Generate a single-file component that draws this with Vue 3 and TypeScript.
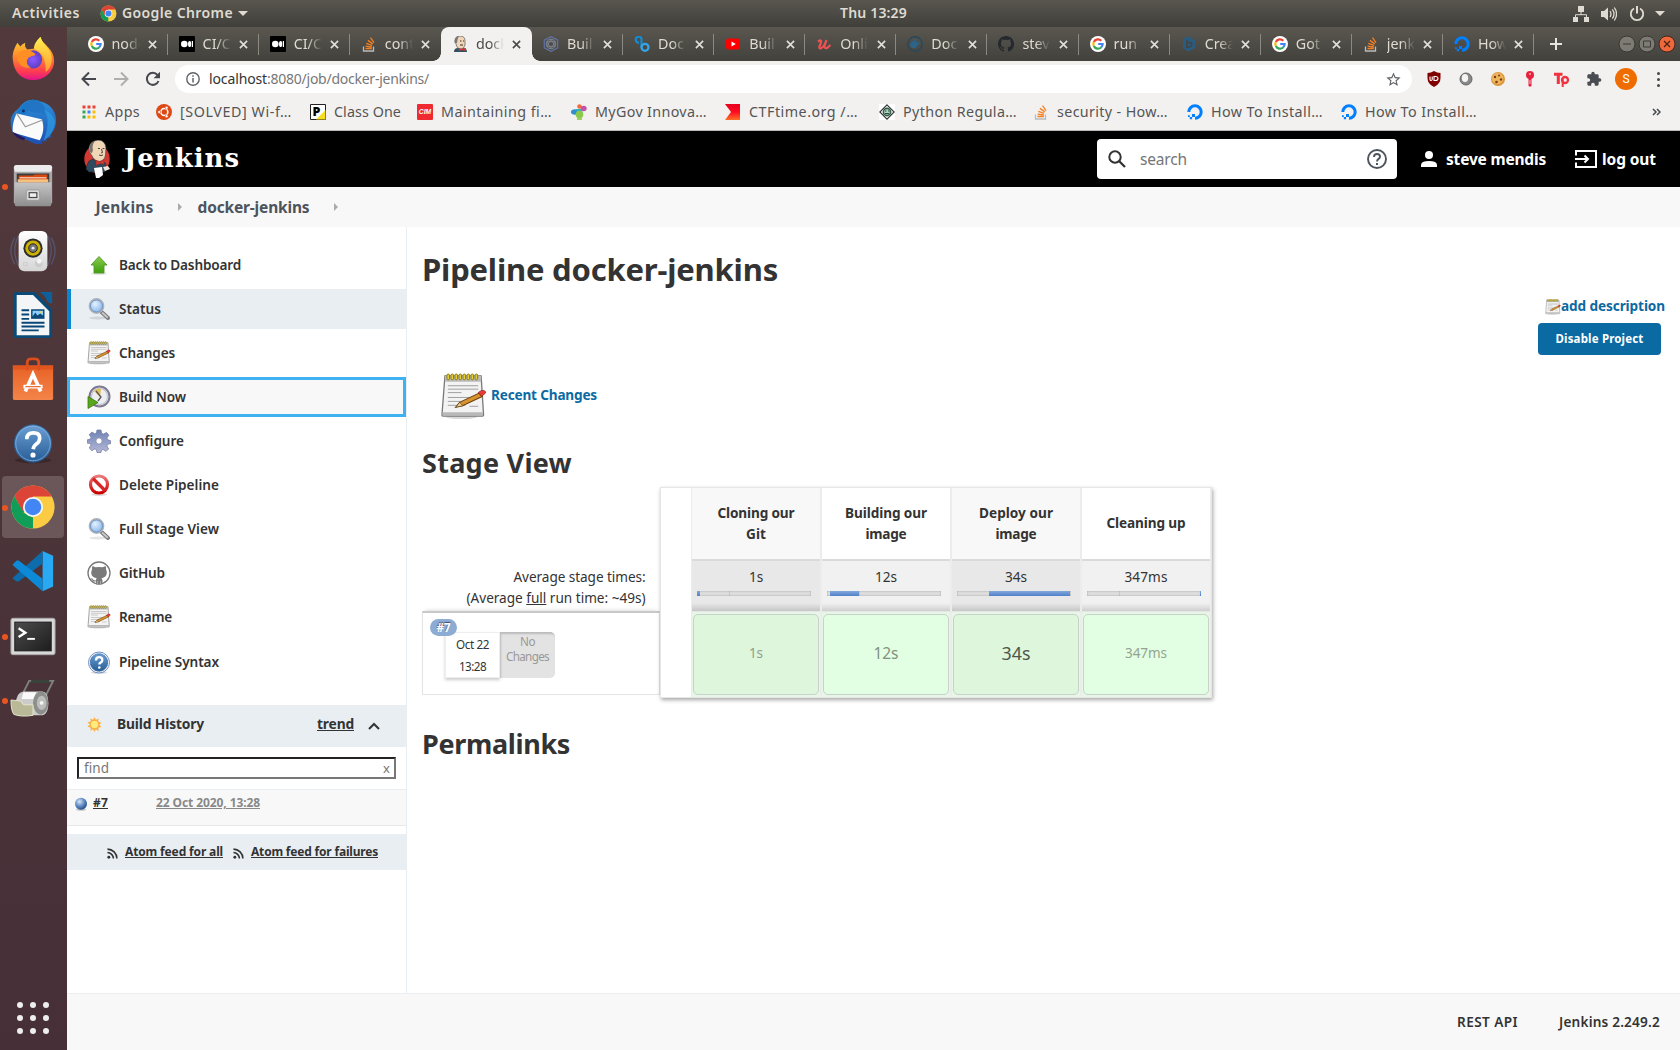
<script setup lang="ts">
interface Tab { icon: string; title: string; active?: boolean }
interface Bookmark { icon: string; label: string; width: number; gap: number; mark?: string }
interface Task { icon: string; label: string; width: number; state?: string }
interface Stage { name: string[]; widths: number[]; avg: string; avgWidth: number; from: number; size: number; cell: string; color: string; font: number; cellWidth: number }

// Spreads the letters of a label so that it takes exactly the given width.
const vFit = {
  mounted(el: HTMLElement, binding: { value: number }) {
    const natural = el.getBoundingClientRect().width
    const count = Math.max(1, (el.textContent ?? '').length)
    el.style.letterSpacing = `${(binding.value - natural) / count}px`
    el.style.width = `${binding.value}px`
  },
}

const dock = [
  { icon: 'firefox' }, { icon: 'thunderbird' }, { icon: 'files', running: true },
  { icon: 'rhythmbox' }, { icon: 'writer' }, { icon: 'software' },
  { icon: 'helpball' }, { icon: 'chrome', running: true, focused: true },
  { icon: 'vscode' }, { icon: 'terminal', running: true }, { icon: 'roller', running: true },
]

const tabs: Tab[] = [
  { icon: 'google', title: 'node' }, { icon: 'medium', title: 'CI/C' }, { icon: 'medium', title: 'CI/C' },
  { icon: 'stack', title: 'cont' }, { icon: 'butlerface', title: 'dock', active: true }, { icon: 'hexa', title: 'Buil' },
  { icon: 'cloudbees', title: 'Doc' }, { icon: 'youtube', title: 'Buil' }, { icon: 'udemy', title: 'Onli' },
  { icon: 'dockerhub', title: 'Doc' }, { icon: 'githubdark', title: 'stev' }, { icon: 'google', title: 'run' },
  { icon: 'hexb', title: 'Crea' }, { icon: 'google', title: 'Got' }, { icon: 'stack', title: 'jenk' },
  { icon: 'ocean', title: 'How' },
]

const bookmarks: Bookmark[] = [
  { icon: 'apps', label: 'Apps', width: 35, gap: 16 },
  { icon: 'ubuntu', label: '[SOLVED] Wi-f…', width: 112, gap: 18 },
  { icon: 'pbox', mark: 'P', label: 'Class One', width: 67, gap: 16 },
  { icon: 'cim', mark: 'CIM', label: 'Maintaining fi…', width: 111, gap: 19 },
  { icon: 'mygov', label: 'MyGov Innova…', width: 112, gap: 18 },
  { icon: 'ctf', label: 'CTFtime.org /…', width: 109, gap: 21 },
  { icon: 'pyreg', label: 'Python Regula…', width: 114, gap: 16 },
  { icon: 'stack', label: 'security - How…', width: 111, gap: 19 },
  { icon: 'ocean', label: 'How To Install…', width: 112, gap: 18 },
  { icon: 'ocean', label: 'How To Install…', width: 112, gap: 0 },
]

const extensions = ['ublock', 'ring', 'cookie', 'pin', 'tp', 'puzzle']

const tasks: Task[] = [
  { icon: 'up', label: 'Back to Dashboard', width: 122 },
  { icon: 'search', label: 'Status', width: 42, state: 'current' },
  { icon: 'notepad', label: 'Changes', width: 56 },
  { icon: 'clock', label: 'Build Now', width: 67, state: 'focus' },
  { icon: 'gear', label: 'Configure', width: 65 },
  { icon: 'ban', label: 'Delete Pipeline', width: 100 },
  { icon: 'search', label: 'Full Stage View', width: 100 },
  { icon: 'octocat', label: 'GitHub', width: 46 },
  { icon: 'notepad', label: 'Rename', width: 53 },
  { icon: 'help', label: 'Pipeline Syntax', width: 100, state: 'last' },
]

const stages: Stage[] = [
  { name: ['Cloning our', 'Git'], widths: [77, 20], avg: '1s', avgWidth: 14, from: 0, size: 3, cell: '1s', color: '#8f9f8e', font: 13.5, cellWidth: 14 },
  { name: ['Building our', 'image'], widths: [82, 41], avg: '12s', avgWidth: 22, from: 3, size: 29, cell: '12s', color: '#82917f', font: 15.5, cellWidth: 25 },
  { name: ['Deploy our', 'image'], widths: [74, 41], avg: '34s', avgWidth: 22, from: 32, size: 81, cell: '34s', color: '#4d574c', font: 17.8, cellWidth: 29 },
  { name: ['Cleaning up'], widths: [79], avg: '347ms', avgWidth: 43, from: 113, size: 1, cell: '347ms', color: '#93a391', font: 13.5, cellWidth: 42 },
]
</script>

<template>
  <div class="desktop">
    <svg class="sprites" aria-hidden="true">
      <defs>
        <linearGradient id="gOrange" x1="0" y1="0" x2="0" y2="1"><stop offset="0" stop-color="#ffd83a" /><stop offset=".45" stop-color="#ff8a2c" /><stop offset=".8" stop-color="#ff3c50" /><stop offset="1" stop-color="#e3148c" /></linearGradient>
        <linearGradient id="gYellow" x1="0" y1="0" x2="0" y2="1"><stop offset="0" stop-color="#fff04f" /><stop offset="1" stop-color="#ff9a30" /></linearGradient>
        <radialGradient id="gPurple"><stop offset="0" stop-color="#9059ff" /><stop offset="1" stop-color="#5b3fc4" /></radialGradient>
        <linearGradient id="gBird" x1="0" y1="0" x2="0" y2="1"><stop offset="0" stop-color="#2c8fd8" /><stop offset="1" stop-color="#1f4fb3" /></linearGradient>
        <linearGradient id="gSteel" x1="0" y1="0" x2="0" y2="1"><stop offset="0" stop-color="#c6c6c6" /><stop offset="1" stop-color="#8e8e8e" /></linearGradient>
        <linearGradient id="gWhite" x1="0" y1="0" x2="0" y2="1"><stop offset="0" stop-color="#fff" /><stop offset="1" stop-color="#d5d5d5" /></linearGradient>
        <linearGradient id="gBall" x1="0" y1="0" x2="0" y2="1"><stop offset="0" stop-color="#6b9fd4" /><stop offset="1" stop-color="#275d95" /></linearGradient>
        <linearGradient id="gBag" x1="0" y1="0" x2="0" y2="1"><stop offset="0" stop-color="#e86226" /><stop offset="1" stop-color="#f4844a" /></linearGradient>
        <linearGradient id="gTerm" x1="0" y1="0" x2="1" y2="1"><stop offset="0" stop-color="#4c4c4c" /><stop offset="1" stop-color="#1d1d1d" /></linearGradient>
        <linearGradient id="gGreen" x1="0" y1="0" x2="0" y2="1"><stop offset="0" stop-color="#8acb4f" /><stop offset="1" stop-color="#3f9f0c" /></linearGradient>
        <linearGradient id="gRed" x1="0" y1="0" x2="0" y2="1"><stop offset="0" stop-color="#ea7a7a" /><stop offset="1" stop-color="#cc0000" /></linearGradient>
        <linearGradient id="gGear" x1="0" y1="0" x2="0" y2="1"><stop offset="0" stop-color="#6d83b5" /><stop offset="1" stop-color="#b5b8d8" /></linearGradient>
        <radialGradient id="gOrb" cx=".38" cy=".32" r=".7"><stop offset="0" stop-color="#d9e6f5" /><stop offset=".5" stop-color="#6a93c8" /><stop offset="1" stop-color="#204a87" /></radialGradient>
        <radialGradient id="gGlass" cx=".4" cy=".35"><stop offset="0" stop-color="#e6f1fd" /><stop offset="1" stop-color="#9dc3ee" /></radialGradient>
        <linearGradient id="gCtf" x1="0" y1="0" x2="0" y2="1"><stop offset="0" stop-color="#e6001f" /><stop offset=".5" stop-color="#ff0b1f" /><stop offset="1" stop-color="#ff7029" /></linearGradient>
      </defs>

      <!-- launcher -->
      <symbol id="firefox" viewBox="0 0 48 48">
        <path d="M3 26C2 19 5 12 8 8c1 2 2 3 3 4 1-2 3-3 5-4-1 3 0 5 2 7l8-1c0-5 3-9 6-12 1 5 5 7 8 11 4 4 6 9 6 14 0 11-10 20-22 20S4 38 3 26z" fill="url(#gOrange)" />
        <path d="M25 14c0-5 4-10 7-12 1 6 6 9 9 14 5 9 2 19-4 23 1-5-1-15-4-19-2-3-5-4-8-6z" fill="url(#gYellow)" />
        <circle cx="24" cy="25.500" r="9.500" fill="url(#gPurple)" />
        <path d="M9 18c5-3 11-3 15 0 2 1 3 2 2 3-2 1-5 1-7 3-3 4-1 8 3 10-6 1-12-2-14-7z" fill="#ff8f25" />
      </symbol>
      <symbol id="thunderbird" viewBox="0 0 48 48">
        <path d="M9 10C14 2 22-1 29 2c11 1 19 9 19 20 0 7-2 12-6 15l1 3-5 1 0 3-5 0 1 3-7 0L4 37C-2 25 0 16 9 10z" fill="url(#gBird)" />
        <path d="M11 9c4-7 13-10 20-7-8 0-11 5-12 10-1 3-4 4-7 4-3 0-4 2-6 3 0-4 2-7 5-10z" fill="#1b78c8" />
        <path d="M19 3c8-3 14 0 17 5l0 9-4-3c-8 1-16 0-13-11z" fill="#2275c4" />
        <path d="M36 12c5 8 4 20-1 31 7-3 11-10 12-19-1-5-5-11-11-12z" fill="#2e9ae0" opacity=".75" />
        <path d="M7 15l26 6c3 7 2 15-2 22L3 35c-1-6 1-15 4-20z" fill="#fafafa" /><path d="M7 15l9 14 18-7" fill="none" stroke="#999" stroke-width="1.200" />
        <path d="M2 34l14 7-2 2C9 42 5 39 2 34z" fill="#281a62" /><circle cx="14" cy="12.500" r="1.500" fill="#102e68" />
      </symbol>
      <symbol id="files" viewBox="0 0 48 48">
        <path d="M4 5q0-3 3-3h34q3 0 3 3v37H4z" fill="#aaa" /><path d="M4 5q0-3 3-3h34q3 0 3 3l-1 4H5z" fill="#ececec" />
        <path d="M7 11h34v12H7z" fill="#3b3b3b" /><path d="M9 13h15l2-1h13v11H9z" fill="#d9480f" /><path d="M8 17h32v3H8z" fill="#f5c27d" /><path d="M10 15h28v1H10z" fill="#fff" />
        <rect x="5" y="20" width="38" height="25" rx="1.500" fill="url(#gSteel)" /><rect x="17" y="28" width="14" height="11" rx="2" fill="#d8d8d8" stroke="#999" /><rect x="20" y="31" width="8" height="5" fill="#eee" stroke="#444" stroke-width="1.200" />
      </symbol>
      <symbol id="rhythmbox" viewBox="0 0 48 48">
        <path d="M5 10q-8 14 0 28M9 8q-8 15 0 32M43 10q8 14 0 28M39 8q8 15 0 32" fill="none" stroke="#5d6f9c" stroke-width="1.400" opacity=".5" />
        <rect x="9" y="3" width="30" height="42" rx="6" fill="url(#gWhite)" /><circle cx="24" cy="21" r="10" fill="#2d2d2d" /><circle cx="24" cy="21" r="8" fill="#cdb100" /><circle cx="24" cy="21" r="4.500" fill="#777" stroke="#222" /><circle cx="24" cy="21" r="1.500" fill="#eee" />
        <circle cx="30" cy="37" r="4" fill="#ccc" /><rect x="28" y="32" width="5" height="5" rx="2" fill="#f4f4f4" /><path d="M14 36h4v3h-4z" fill="none" stroke="#ccc" />
      </symbol>
      <symbol id="writer" viewBox="0 0 48 48">
        <path d="M6 0h20l18 18v28q0 2-2 2H6q-2 0-2-2V2q0-2 2-2z" fill="#0b4a77" /><path d="M31 0h13v12q-4 0-6-4-1-4-7-8z" fill="#0d609b" /><path d="M7 3h17l17 17v25H7z" fill="#f3f5f6" />
        <path d="M12 19h8M12 23.500h8M12 28h8M12 32h24M12 36h24M12 40h18" stroke="#064778" stroke-width="2" /><rect x="22" y="18" width="14" height="10" fill="#0b4a77" /><path d="M23.500 19.500h11v5l-3-2-3 2-2-3-3 4z" fill="#8bd0ff" /><circle cx="32.500" cy="21" r="1.200" fill="#ffce3d" />
      </symbol>
      <symbol id="software" viewBox="0 0 48 48">
        <path d="M18 15V7q0-4 4-4h4q4 0 4 4v8" fill="none" stroke="#c9461c" stroke-width="3" /><path d="M3 10h42v34q0 2-2 2H5q-2 0-2-2z" fill="url(#gBag)" /><path d="M3 10h42v4H3z" fill="#e1551f" />
        <path d="M18 15V7q0-4 4-4h4q4 0 4 4v8" fill="none" stroke="#dd4f20" stroke-width="2" /><path d="M16 37l8-18 8 18M14 32h20" fill="none" stroke="#fff" stroke-width="3.800" /><path d="M16 32h16" stroke="#e86226" stroke-width="1.200" />
      </symbol>
      <symbol id="helpball" viewBox="0 0 48 48">
        <ellipse cx="24" cy="42" rx="19" ry="3" fill="#000" opacity=".25" /><circle cx="24" cy="24.500" r="19.500" fill="url(#gBall)" stroke="#2a5d90" /><circle cx="24" cy="24.500" r="18" fill="none" stroke="#85b1df" stroke-width=".8" />
        <path d="M17.500 20q0-6.500 7-6.500 6.500 0 6.500 5.500 0 3.500-3.500 6-3 2.200-3.300 5.500" fill="none" stroke="#fff" stroke-width="3.800" /><circle cx="24" cy="36.500" r="2.700" fill="#fff" />
      </symbol>
      <symbol id="chrome" viewBox="0 0 48 48">
        <circle cx="24" cy="24" r="22.500" fill="#fbcb43" /><path d="M43.500 13H24L14 30 4.500 12.800A22.500 22.500 0 0 1 43.500 13z" fill="#db4437" />
        <path d="M4.500 12.800L14.500 30 24 35l0 11.500A22.500 22.500 0 0 1 4.500 12.800z" fill="#109d58" /><path d="M24 46.500l9.500-17L24 34z" fill="#fbcb43" /><circle cx="24" cy="24" r="10.500" fill="#f4f5f6" /><circle cx="24" cy="24" r="8.600" fill="#4285f4" />
      </symbol>
      <symbol id="vscode" viewBox="0 0 48 48">
        <path d="M34 2l11 5v32l-11 5z" fill="#29a8f3" /><path d="M3 30L34 2v13L9 34H7l-4-3z" fill="#0c6cac" /><path d="M3 16l4-4h2l25 19v13L3 17z" fill="#0d8ad7" />
      </symbol>
      <symbol id="terminal" viewBox="0 0 48 48">
        <rect x="1" y="5.500" width="46" height="38" rx="2" fill="#d8d8d8" stroke="#a7a7a7" /><rect x="5" y="9.500" width="38" height="30" fill="url(#gTerm)" stroke="#1a1a1a" /><path d="M9 16l7 4.500-7 4.500" fill="none" stroke="#fff" stroke-width="2.500" /><path d="M18 27h8" stroke="#fff" stroke-width="2" />
      </symbol>
      <symbol id="roller" viewBox="0 0 48 48">
        <path d="M14 16L20 4h25L34 26" fill="none" stroke="#7d837c" stroke-width="2" /><path d="M22 4.500h19" stroke="#3a423c" stroke-width="3.500" /><path d="M14 15h20q6 1 6 12 0 13-8 13H12q-6 0-6-11 0-13 8-14z" fill="#ccc" /><path d="M14 16h13v7H12z" fill="#fafafa" />
        <ellipse cx="32" cy="27" rx="8" ry="12" fill="#8d8f8c" /><ellipse cx="33" cy="27" rx="5" ry="7.500" fill="#bcbcbc" /><path d="M1 24l10 1 3 4h10v11q-12 2-20-1-3-4-3-15z" fill="#b9b998" stroke="#e6e6ce" /><circle cx="33" cy="27" r="2" fill="#f4f4f4" />
      </symbol>

      <!-- favicons -->
      <symbol id="google" viewBox="0 0 16 16"><circle cx="8" cy="8" r="8" fill="#fff" /><g fill="none" stroke-width="2.200"><path d="M11.300 4.700A4.700 4.700 0 0 0 3.800 6" stroke="#ea4335" /><path d="M3.800 6a4.700 4.700 0 0 0 0 4" stroke="#fbbc05" /><path d="M3.800 10a4.700 4.700 0 0 0 7.300 1.500" stroke="#34a853" /><path d="M8.200 8h4.400q0 2-1.500 3.500" stroke="#4285f4" /></g></symbol>
      <symbol id="medium" viewBox="0 0 16 16"><rect width="16" height="16" rx="1" fill="#000" /><circle cx="5.300" cy="8" r="3.300" fill="#fff" /><ellipse cx="10.600" cy="8" rx="1.600" ry="3.100" fill="#fff" /><path d="M13.400 5v6" stroke="#fff" stroke-width="1.200" /></symbol>
      <symbol id="stack" viewBox="0 0 16 16"><path d="M2.500 10.500v4.500h10v-4.500" fill="none" stroke="#bcbbbb" stroke-width="1.300" /><path d="M4.500 12.500h6.300M4.600 10.100l6.200.9M5.300 7.300l5.800 2M6.900 4.400l4.900 3.500M9.500 1.600l3.500 5" stroke="#f48024" stroke-width="1.300" /></symbol>
      <symbol id="butler" viewBox="0 0 26 38">
        <ellipse cx="13" cy="19" rx="12.700" ry="14" fill="#d33833" /><path d="M5 8Q6 1 14 0q7 0 8 8l-.5 7q-1 6-6 6.500-5 0-8-6.500-3-3-2.500-7z" fill="#f0d6b7" stroke="#444" stroke-width=".7" /><path d="M5.500 10Q5 2 11 1 7.500 5 9 10l-1 3q-2 0-2.500-3z" fill="#77716b" />
        <path d="M5 21l4-2q5 5 10 2l3 3-1 8H9l-4 0-3-3q1-5 3-8z" fill="#2f4a5e" stroke="#1c2c38" stroke-width=".6" /><path d="M10 28l8-1 1 8-4 3h-3z" fill="#fff" /><path d="M12 20.500l4 1 4-2v5l-4-1-4 2z" fill="#d33833" stroke="#81201d" stroke-width=".4" /><path d="M19 27l5-1 2 3-5 2z" fill="#f3e6d8" /><path d="M14 8.500h2M18.500 8.500h2M15 15q2 1 4 0M17.500 9l1 3.500-1.500.5" stroke="#333" stroke-width=".9" fill="none" />
      </symbol>
      <symbol id="butlerface" viewBox="0 0 16 16"><path d="M2 16q0-4 4-4h5q4 0 4 4z" fill="#335061" /><path d="M3 5q0-5 5-5t5 5l0 4q-1 4-4 4-4 0-5-5z" fill="#f0d6b7" stroke="#555" stroke-width=".7" /><path d="M2.500 7Q2 1 7 0 5 3 5 7z" fill="#777" /><path d="M8 5h1.500M11 5h1M8 9h3" stroke="#333" /><path d="M7 12l3 1 4-1v3l-4-1-3 1z" fill="#d33833" /></symbol>
      <symbol id="hexa" viewBox="0 0 16 16"><g fill="none" stroke="#5f71a5"><path d="M8 .6l6.700 3.600v7.600L8 15.400 1.300 11.800V4.200z" stroke-width="1.200" /><circle cx="8" cy="8" r="4.800" stroke="#80868f" /><path d="M8 3.200L12.200 10.300H3.800zM3.800 5.700h8.400L8 12.800z" stroke="#7c8494" stroke-width=".9" /></g></symbol>
      <symbol id="cloudbees" viewBox="0 0 16 16"><path d="M5 6.500A2.900 2.900 0 1 1 7.500 3v8" fill="none" stroke="#168bd2" stroke-width="2.200" /><circle cx="11" cy="11.300" r="3.500" fill="none" stroke="#35a5e8" stroke-width="2.300" /></symbol>
      <symbol id="youtube" viewBox="0 0 16 16"><rect x="1" y="2.500" width="14" height="11" rx="2.500" fill="#f00" /><path d="M6.500 5.500v5l4.300-2.500z" fill="#fff" /></symbol>
      <symbol id="udemy" viewBox="0 0 16 16"><path d="M2 5.500q4-2.500 3 1l-1.700 4.500q0 2.200 2 1.200 3-2 5.200-8.200L8.500 10q0 3 2.500 2l3.500-3" fill="none" stroke="#ec5252" stroke-width="2.200" /></symbol>
      <symbol id="dockerhub" viewBox="0 0 16 16"><circle cx="8" cy="8" r="7.200" fill="none" stroke="#27495c" stroke-width="1.400" /><path d="M3 7.300h7.500l1-2 1 2h1q-1 1-2 1.300-1.500 3.700-5 3.700-3.500 0-3.500-5zM4.500 5.300H10v2H4.500zM6.500 3.300h2v2h-2z" fill="#2d6386" /></symbol>
      <symbol id="githubdark" viewBox="0 0 16 16"><path fill="#24292e" d="M8 0C3.580 0 0 3.580 0 8c0 3.540 2.290 6.530 5.470 7.590.4.070.55-.17.55-.38 0-.19-.01-.82-.01-1.490-2.010.37-2.530-.49-2.690-.94-.09-.23-.48-.94-.82-1.130-.28-.15-.68-.52-.01-.53.63-.01 1.080.58 1.230.82.72 1.210 1.870.87 2.330.66.07-.52.28-.87.51-1.070-1.780-.2-3.640-.89-3.640-3.950 0-.87.31-1.590.82-2.150-.08-.2-.36-1.020.08-2.120 0 0 .67-.21 2.200.82.64-.18 1.320-.27 2-.27s1.360.09 2 .27c1.530-1.040 2.200-.82 2.200-.82.44 1.100.16 1.920.08 2.120.51.56.82 1.270.82 2.150 0 3.070-1.870 3.750-3.650 3.950.29.25.54.73.54 1.480 0 1.070-.01 1.930-.01 2.200 0 .21.15.46.55.38A8.010 8.010 0 0 0 16 8c0-4.420-3.580-8-8-8z" /></symbol>
      <symbol id="hexb" viewBox="0 0 16 16"><path d="M2 2.500l5-2 7 3.500v8L7.500 15.500 2 12.500z" fill="#2a5c80" /><path d="M6 3.500v8.500M6 7q5-1.500 4.700 1.500Q10.500 11 6 11.700" fill="none" stroke="#46433e" stroke-width="1.600" /></symbol>
      <symbol id="ocean" viewBox="0 0 16 16"><path d="M8 14.200A6.200 6.200 0 1 0 1.800 8" fill="none" stroke="#0080ff" stroke-width="3" /><path d="M5 10h3v3H5zM2.800 13h2.300v2.300H2.800zM1 11.200h1.800V13H1z" fill="#0080ff" /></symbol>
      <symbol id="apps" viewBox="0 0 16 16"><path d="M1.500 1.500h3v3h-3zM6.500 1.500h3v3h-3zM11.500 1.500h3v3h-3z" fill="#ea4335" /><path d="M1.500 6.500h3v3h-3z" fill="#34a853" /><path d="M6.500 6.500h3v3h-3z" fill="#4285f4" /><path d="M11.500 6.500h3v3h-3zM6.500 11.500h3v3h-3zM11.500 11.500h3v3h-3z" fill="#fbbc05" /><path d="M1.500 11.500h3v3h-3z" fill="#34a853" /></symbol>
      <symbol id="ubuntu" viewBox="0 0 16 16"><circle cx="8" cy="8" r="8" fill="#dd4814" /><circle cx="8.300" cy="8" r="3.500" fill="none" stroke="#fff" stroke-width="1.600" /><g fill="#fff" stroke="#dd4814" stroke-width=".6"><circle cx="3.200" cy="8" r="1.500" /><circle cx="10.600" cy="3.700" r="1.500" /><circle cx="10.600" cy="12.300" r="1.500" /></g></symbol>
      <symbol id="pbox" viewBox="0 0 16 16"><path d="M.5.500h15v15H.5z" fill="#fff" stroke="#222" /><path d="M15.500 6v9.500H6z" fill="#f7df1e" /></symbol>
      <symbol id="cim" viewBox="0 0 16 16"><rect width="16" height="16" rx="1" fill="#ee2a30" /></symbol>
      <symbol id="mygov" viewBox="0 0 16 16"><ellipse cx="4" cy="8" rx="4" ry="2.800" fill="#2f8fd0" /><path d="M5 5l5 0 2 4-4 2z" fill="#32b3b0" /><circle cx="8.500" cy="2.500" r="2.300" fill="#f26a3c" /><ellipse cx="12.700" cy="4.500" rx="3" ry="2.700" fill="#c651a8" /><circle cx="8.500" cy="10.500" r="3.800" fill="#8cc84b" /><path d="M6 14h5v2H6z" fill="#9fd15f" /></symbol>
      <symbol id="ctf" viewBox="0 0 16 16"><path d="M0 0h15v16H0l6-8z" fill="url(#gCtf)" /></symbol>
      <symbol id="pyreg" viewBox="0 0 16 16"><path d="M0 0h16v16H0z" fill="#fff" /><path d="M8 .8L15.200 8 8 15.200.8 8z" fill="#f4f8f5" stroke="#333" stroke-width="1.100" /><circle cx="8" cy="8" r="3.600" fill="#b9d4c6" stroke="#33604a" stroke-width="1.600" /><path d="M6 7h1.500M9 7h1.500M6 9.500h4" stroke="#1f4a37" /></symbol>

      <!-- browser extensions -->
      <symbol id="ublock" viewBox="0 0 16 16"><path d="M8 0q3 2 6.500 2v5q0 6-6.500 9-6.500-3-6.500-9V2Q5 2 8 0z" fill="#800000" /><path d="M4 5.500v3q0 1 1 1t1.200-1v-3M8 5.500v4h1.500q2.500 0 2.500-2t-2.500-2z" fill="none" stroke="#fff" stroke-width="1.100" /></symbol>
      <symbol id="ring" viewBox="0 0 16 16"><circle cx="8" cy="8" r="6" fill="#888" /><circle cx="8" cy="8" r="6" fill="none" stroke="#666" /><ellipse cx="7" cy="7" rx="3.200" ry="4" fill="#f4f4f4" /></symbol>
      <symbol id="cookie" viewBox="0 0 16 16"><circle cx="8" cy="8" r="7" fill="#d9963f" /><circle cx="7.500" cy="7.500" r="5.700" fill="#efb45c" /><g fill="#7b3f14"><circle cx="5" cy="6" r="1.200" /><circle cx="9" cy="4.500" r="1" /><circle cx="11" cy="8.500" r="1.200" /><circle cx="6.500" cy="11" r="1.300" /></g></symbol>
      <symbol id="pin" viewBox="0 0 16 16"><circle cx="8" cy="4" r="4" fill="#e8213d" /><path d="M6.500 7h3v8q-1.500 1-3 0z" fill="#e8213d" /><path d="M7 3h2" stroke="#fff" /><path d="M8 9v4" stroke="#fff" stroke-width=".7" /></symbol>
      <symbol id="tp" viewBox="0 0 16 16"><path d="M0 3.200h8.500M4.300 3.200V13" stroke="#ef3340" stroke-width="3" /><circle cx="11" cy="9" r="3" fill="none" stroke="#ef3340" stroke-width="2.300" /><path d="M8.700 8v8" stroke="#ef3340" stroke-width="2" /></symbol>
      <symbol id="puzzle" viewBox="0 0 24 24"><path fill="#494c50" d="M20.500 11H19V7c0-1.100-.9-2-2-2h-4V3.500a2.500 2.500 0 0 0-5 0V5H4c-1.100 0-2 .9-2 2v3.800h1.500c1.500 0 2.700 1.200 2.700 2.700s-1.200 2.700-2.700 2.700H2V20c0 1.100.9 2 2 2h3.800v-1.500c0-1.500 1.200-2.700 2.700-2.700s2.700 1.200 2.700 2.700V22H17c1.100 0 2-.9 2-2v-4h1.500a2.500 2.500 0 0 0 0-5z" /></symbol>

      <!-- Jenkins task icons -->
      <symbol id="up" viewBox="0 0 24 24"><ellipse cx="12" cy="20.500" rx="8" ry="1.500" fill="#000" opacity=".12" /><path d="M12 3.500L20 12h-3v8H7v-8H4z" fill="url(#gGreen)" stroke="#4f9a28" stroke-width=".9" /></symbol>
      <symbol id="search" viewBox="0 0 24 24"><ellipse cx="11" cy="21" rx="9" ry="1.500" fill="#000" opacity=".1" /><path d="M14.500 15l6.500 6" stroke="#777" stroke-width="4" stroke-linecap="round" /><path d="M15 15.500l5.800 5.300" stroke="#c7c7c7" stroke-width="2" /><circle cx="9.500" cy="9" r="7" fill="url(#gGlass)" stroke="#b0b3b7" stroke-width="1.800" /><circle cx="9.500" cy="9" r="6" fill="none" stroke="#5d8bc4" stroke-width=".8" /></symbol>
      <symbol id="notepad" viewBox="0 0 48 48">
        <ellipse cx="22" cy="45" rx="16" ry="2" fill="#000" opacity=".15" /><path d="M5 3h37l2.500 40q0 1-1 1H3q-1 0-1-1z" fill="#f3f3f3" stroke="#777" stroke-width="1.300" /><path d="M5 3h37v6H5z" fill="#bbb" /><path d="M2.700 40h41v3h-41z" fill="#b9b9b9" />
        <g fill="#e5cf33" stroke="#7d6a00" stroke-width=".8"><rect v-for="n in 8" :key="n" :x="3 + n * 4.100" y="1" width="2.600" height="6" rx="1.300" /></g>
        <path d="M8 13h31M8 16.500h31M8 20h14M8 25h29M8 29h24M8 33h18M30 34h9" stroke="#a0a0a0" /><path d="M16 35l4-5 20-9.500 3 3.500-20 9.500z" fill="#d9922e" stroke="#6b430b" stroke-width="1.100" /><path d="M39 20l3-2q5-1 4.500 2.500L42.500 24z" fill="#e83b36" stroke="#80201c" stroke-width=".7" /><path d="M16 35l4-5 3.500 3.500z" fill="#e8cf9c" stroke="#5b3a0c" stroke-width=".7" />
      </symbol>
      <symbol id="clock" viewBox="0 0 24 24"><circle cx="12.500" cy="11.500" r="10" fill="#eceef1" stroke="#7d7a92" stroke-width="2" /><circle cx="12.500" cy="11.500" r="8" fill="none" stroke="#b7bcc6" /><path d="M7 6l6 6 1-8Q9 3 7 6z" fill="#e3c15a" /><path d="M9 6l5 6-3 4" fill="none" stroke="#555" stroke-width="1.300" /><path d="M1 11.500L11 17.500 1 23.500z" fill="#57a61b" stroke="#387a0a" stroke-width=".8" /></symbol>
      <symbol id="gear" viewBox="0 0 24 24"><path d="M10 1h4l.7 3.300 1.800.8 3-1.700 2.400 2.800-2 2.700.7 1.700L24 12v2.500l-3.400.8-.7 1.800 1.700 3-2.800 2.200-2.700-1.900-1.600.6L14 23.500h-4l-.6-3-1.700-.6-2.800 1.800L2.200 19l1.800-2.800-.7-1.600L0 14v-3l3.300-1 .7-1.600L2.200 5.600 5 3l2.700 1.800 1.600-.7z" fill="url(#gGear)" stroke="#7c82a5" stroke-width=".8" /><circle cx="12" cy="12" r="3.200" fill="#fff" stroke="#8b90ae" /></symbol>
      <symbol id="ban" viewBox="0 0 24 24"><ellipse cx="12" cy="21.500" rx="8" ry="1.500" fill="#000" opacity=".15" /><circle cx="12" cy="11.500" r="8.500" fill="#fff" stroke="url(#gRed)" stroke-width="3.200" /><path d="M6 5.500l12 12" stroke="#d62626" stroke-width="3.200" /></symbol>
      <symbol id="octocat" viewBox="0 0 24 24"><circle cx="12" cy="12" r="11" fill="#fff" stroke="#777" stroke-width="1.300" /><path d="M5.500 5l3 1.300q3.500-.8 7 0l3-1.300q1 1.500.5 3.500 1 1.500.8 3.500-.3 4.500-5.300 5.200 1 1 1 2.500v3.500H9v-3q-3 .7-4-1.200-.5-1-1.400-1.600 1.500-.3 2.500 1.200 1 1.200 2.900.6 0-1.200.7-2Q4.500 16.500 4.200 12q0-2 .9-3.500-.5-2 .4-3.500z" fill="#7a7a7a" /><path d="M10.500 20v3M13.500 20v3" stroke="#bbb" stroke-width=".7" /></symbol>
      <symbol id="help" viewBox="0 0 24 24"><ellipse cx="12" cy="22.500" rx="8" ry="1.300" fill="#000" opacity=".15" /><circle cx="12" cy="12.500" r="10.500" fill="#fff" stroke="#6b8fc4" /><circle cx="12" cy="12.500" r="8.700" fill="url(#gBall)" stroke="#3465a4" stroke-dasharray="1.500 .5" /><path d="M9 10.500q0-3.300 3.200-3.300T15.300 10.200q0 1.500-1.800 2.400-1.200.6-1.200 2" fill="none" stroke="#fff" stroke-width="2.300" /><circle cx="12.300" cy="17.500" r="1.300" fill="#fff" /></symbol>
      <symbol id="sun" viewBox="0 0 16 16"><path d="M8 0l1.500 3 3-1.500-.6 3.300L15.500 6l-2.400 2.200 2.400 2.500-3.400.8.400 3.300-3-1.500L8 16l-1.500-3-3 1.700.5-3.300L.5 10.500 3 8 .5 5.700 4 4.900 3.500 1.500l3 1.500z" fill="#fcb04a" /><circle cx="8" cy="8" r="4.300" fill="#fbec7c" stroke="#f5a33c" stroke-width=".8" /></symbol>
      <symbol id="rss" viewBox="0 0 12 12"><circle cx="2" cy="10" r="1.600" fill="#333" /><path d="M.5 5a6.500 6.500 0 0 1 6.500 6.500M.5 1.200A10.300 10.300 0 0 1 10.800 11.500" fill="none" stroke="#333" stroke-width="1.700" /></symbol>
    </svg>

    <header class="panel">
      <span v-fit="68" class="activities">Activities</span>
      <svg class="panel-chrome"><use href="#chrome" /></svg>
      <span v-fit="111">Google Chrome</span>
      <i class="caret app-caret"></i>
      <span v-fit="67" class="clock">Thu 13:29</span>
      <div class="tray">
        <svg width="16" height="16" viewBox="0 0 16 16"><path d="M5 0h6v6H5zM0 11h5v5H0zM11 11h5v5h-5z" fill="#dfdbd2" /><path d="M8 6v3M2.500 11V8.700h11V11" fill="none" stroke="#dfdbd2" /></svg>
        <svg width="16" height="16" viewBox="0 0 16 16"><path d="M0 5h3l4-3.500v13L3 11H0z" fill="#dfdbd2" /><path d="M9 5q2 3 0 6M11.300 3.300q3.500 4.700 0 9.400M13.300 1.500q4.500 6.500 0 13" fill="none" stroke="#dfdbd2" stroke-width="1.300" /></svg>
        <svg width="16" height="16" viewBox="0 0 16 16"><path d="M5 2.500a6.200 6.200 0 1 0 6 0" fill="none" stroke="#dfdbd2" stroke-width="1.800" /><path d="M8 0v7.500" stroke="#dfdbd2" stroke-width="2" /></svg>
        <i class="caret"></i>
      </div>
    </header>

    <div class="workspace">
      <nav class="dock">
        <div v-for="item in dock" :key="item.icon" class="dock-slot" :class="{ focused: item.focused }">
          <i v-if="item.running" class="running"></i>
          <svg class="dock-icon"><use :href="'#' + item.icon" /></svg>
        </div>
        <div class="app-grid"><i v-for="n in 9" :key="n"></i></div>
      </nav>

      <div class="window">
        <div class="tabstrip">
          <div v-for="(tab, i) in tabs" :key="i" class="tab" :class="{ active: tab.active, plain: tabs[i + 1]?.active }">
            <svg class="fav"><use :href="'#' + tab.icon" /></svg>
            <span class="tab-title">{{ tab.title }}</span>
            <svg class="close" viewBox="0 0 10 10"><path d="M1 1l8 8M9 1L1 9" /></svg>
          </div>
          <svg class="plus" viewBox="0 0 12 12"><path d="M6 0v12M0 6h12" stroke="#e8e5df" stroke-width="2" /></svg>
          <div class="controls">
            <svg viewBox="0 0 18 18"><circle cx="9" cy="9" r="8" fill="#7d7b74" stroke="#383733" /><path d="M5 9h8" stroke="#3b3a36" /></svg>
            <svg viewBox="0 0 18 18"><circle cx="9" cy="9" r="8" fill="#7d7b74" stroke="#383733" /><path d="M5.500 6h7v6h-7z" fill="none" stroke="#3b3a36" /></svg>
            <svg viewBox="0 0 18 18"><circle cx="9" cy="9" r="8" fill="#ee683b" stroke="#45271b" /><path d="M6 6l6 6M12 6l-6 6" stroke="#4a2415" stroke-width="1.300" /></svg>
          </div>
        </div>

        <div class="toolbar">
          <svg class="nav-icon" viewBox="0 0 16 16"><path d="M15 8H2M8 1.500L1.500 8 8 14.500" fill="none" stroke="#45484c" stroke-width="2" /></svg>
          <svg class="nav-icon" viewBox="0 0 16 16"><path d="M1 8h13M8 1.500L14.500 8 8 14.500" fill="none" stroke="#aeaeae" stroke-width="2" /></svg>
          <svg class="nav-icon" viewBox="0 0 16 16"><path d="M13.500 10A6 6 0 1 1 12.500 4" fill="none" stroke="#45484c" stroke-width="2" /><path d="M15 .8v6.400H8.600z" fill="#45484c" /></svg>
          <div class="omnibox">
            <svg width="14" height="14" viewBox="0 0 14 14"><circle cx="7" cy="7" r="6.200" fill="none" stroke="#5f6368" stroke-width="1.400" /><path d="M7 6v4.500M7 3.300v1.500" stroke="#5f6368" stroke-width="1.500" /></svg>
            <span v-fit="58" class="host">localhost</span><span v-fit="162" class="path">:8080/job/docker-jenkins/</span>
            <svg class="star" viewBox="0 0 24 24"><path fill="#5f6368" d="M22 9.240l-7.190-.62L12 2 9.190 8.630 2 9.240l5.460 4.730L5.820 21 12 17.270 18.180 21l-1.630-7.030L22 9.240zM12 15.400l-3.760 2.270 1-4.280-3.320-2.880 4.380-.38L12 6.100l1.710 4.040 4.380.38-3.320 2.880 1 4.280L12 15.400z" /></svg>
          </div>
          <div class="extensions">
            <svg v-for="e in extensions" :key="e"><use :href="'#' + e" /></svg>
          </div>
          <span class="avatar">S</span>
          <span class="kebab"><i></i><i></i><i></i></span>
        </div>

        <div class="bookmarks">
          <div v-for="(b, i) in bookmarks" :key="i" class="bookmark" :style="{ marginRight: b.gap + 'px' }">
            <span class="mark">
              <svg width="16" height="16"><use :href="'#' + b.icon" /></svg>
              <em v-if="b.mark" :class="b.icon">{{ b.mark }}</em>
            </span>
            <span v-fit="b.width">{{ b.label }}</span>
          </div>
          <svg class="more" viewBox="0 0 9 8"><path d="M1 1l3 3-3 3M5 1l3 3-3 3" fill="none" stroke="#45484c" stroke-width="1.500" /></svg>
        </div>

        <div class="jenkins-head">
          <svg class="butler"><use href="#butler" /></svg>
          <span v-fit="116" class="wordmark">Jenkins</span>
          <div class="searchbox">
            <svg width="18" height="18" viewBox="0 0 18 18"><circle cx="7" cy="7" r="5.700" fill="none" stroke="#333" stroke-width="2" /><path d="M11 11l6 6" stroke="#333" stroke-width="2.300" /></svg>
            <span v-fit="47">search</span>
            <svg class="q" viewBox="0 0 20 20"><circle cx="10" cy="10" r="9" fill="none" stroke="#4d545d" stroke-width="1.900" /><path d="M7 8q0-3 3-3t3 2.700q0 1.300-1.700 2.400Q10 11 10 12.500" fill="none" stroke="#4d545d" stroke-width="1.900" /><path d="M10 14v2" stroke="#4d545d" stroke-width="2" /></svg>
          </div>
          <svg class="person" viewBox="0 0 16 16"><circle cx="8" cy="4" r="4" fill="#fff" /><path d="M0 16v-2q0-4 8-4t8 4v2z" fill="#fff" /></svg>
          <b v-fit="100" class="user">steve mendis</b>
          <svg class="logout" viewBox="0 0 22 18"><path d="M1 5.500V1h20v16H1v-4.500M0 9h13M9.500 5.500L13 9l-3.500 3.500" fill="none" stroke="#fff" stroke-width="2" /></svg>
          <b v-fit="54">log out</b>
        </div>

        <div class="crumbs">
          <b v-fit="58">Jenkins</b><i></i><b v-fit="112">docker-jenkins</b><i></i>
        </div>

        <div class="page">
          <aside>
            <ul class="tasks">
              <li v-for="t in tasks" :key="t.label" :class="t.state">
                <svg><use :href="'#' + t.icon" /></svg><span v-fit="t.width">{{ t.label }}</span>
              </li>
            </ul>
            <div class="history-head">
              <svg><use href="#sun" /></svg>
              <b v-fit="87">Build History</b>
              <b v-fit="37" class="trend">trend</b>
              <svg class="chev" viewBox="0 0 12 8"><path d="M1 7l5-5 5 5" fill="none" stroke="#333" stroke-width="2" /></svg>
            </div>
            <div class="find"><span v-fit="25">find</span><span class="x">x</span></div>
            <div class="build">
              <svg viewBox="0 0 14 14"><ellipse cx="7" cy="12.500" rx="5" ry="1.300" fill="#000" opacity=".2" /><circle cx="7" cy="6.800" r="6" fill="url(#gOrb)" /></svg>
              <b v-fit="15">#7</b><b v-fit="104" class="date">22 Oct 2020, 13:28</b>
            </div>
            <div class="feeds">
              <svg><use href="#rss" /></svg><b v-fit="98">Atom feed for all</b>
              <svg class="second"><use href="#rss" /></svg><b v-fit="127">Atom feed for failures</b>
            </div>
          </aside>

          <main>
            <h1><span v-fit="356">Pipeline docker-jenkins</span></h1>
            <div class="describe">
              <svg><use href="#notepad" /></svg><b v-fit="104">add description</b>
            </div>
            <div class="disable"><button><span v-fit="88">Disable Project</span></button></div>
            <div class="recent"><svg><use href="#notepad" /></svg><b v-fit="106">Recent Changes</b></div>
            <h2><span v-fit="150">Stage View</span></h2>

            <section class="stage-view">
              <div class="left">
                <div class="legend">
                  <span v-fit="132">Average stage times:</span>
                  <span v-fit="179">(Average <u>full</u> run time: ~49s)</span>
                </div>
                <div class="run">
                  <span class="badge">#7</span>
                  <div class="when"><span v-fit="33">Oct 22</span><span v-fit="27">13:28</span></div>
                  <div class="nochange"><span v-fit="15">No</span><span v-fit="43">Changes</span></div>
                </div>
              </div>
              <div class="table">
                <div class="blank"></div>
                <div v-for="s in stages" :key="s.cell + s.from" class="stage">
                  <div class="name"><span v-for="(n, i) in s.name" :key="n" v-fit="s.widths[i]">{{ n }}</span></div>
                  <div class="avg">
                    <span v-fit="s.avgWidth">{{ s.avg }}</span>
                    <div class="meter"><i :style="{ marginLeft: s.from + 'px', width: s.size + 'px' }"></i></div>
                  </div>
                  <div class="cell"><div><span v-fit="s.cellWidth" :style="{ color: s.color, fontSize: s.font + 'px' }">{{ s.cell }}</span></div></div>
                </div>
              </div>
            </section>
            <h2 class="perma"><span v-fit="148">Permalinks</span></h2>
          </main>
        </div>

        <footer><span v-fit="61">REST API</span><span v-fit="101">Jenkins 2.249.2</span></footer>
      </div>
    </div>
  </div>
</template>

<style>
html, body { margin: 0; overflow: hidden; }
</style>

<style scoped>
* { box-sizing: border-box; }
.desktop { width: 1680px; height: 1050px; display: flex; flex-direction: column; font-family: "Noto Sans", "Open Sans", sans-serif; color: #333; overflow: hidden; }
svg { display: block; flex: none; }
span, b { white-space: nowrap; flex: none; }
.sprites { position: absolute; width: 0; height: 0; }

.panel { height: 27px; display: flex; align-items: center; padding-left: 12px; background: linear-gradient(#59564f, #403f3a); color: #dfdbd2; font-size: 14px; font-weight: 600; line-height: 26px; }
.panel > span { height: 27px; }
.panel-chrome { width: 17px; height: 17px; margin: 0 5px 0 20px; }
.caret { border: 5px solid transparent; border-top: 5.500px solid #dfdbd2; border-bottom: 0; }
.app-caret { margin-left: 5px; }
.clock { margin-left: 592px; }
.tray { margin-left: auto; display: flex; align-items: center; gap: 12px; padding-right: 15px; }
.tray .caret { margin-left: -2px; }

.workspace { flex: 1; display: flex; min-height: 0; }
.dock { width: 67px; flex: none; background: linear-gradient(#523a3c, #4a3338 60%, #462f37); display: flex; flex-direction: column; align-items: center; padding-right: 2px; }
.dock-slot { width: 62px; height: 62px; margin-bottom: 2.200px; border-radius: 4px; display: flex; align-items: center; justify-content: center; position: relative; }
.dock-slot.focused { background: #6b5659; }
.dock-icon { width: 46px; height: 46px; }
.running { position: absolute; left: 0; top: 29px; width: 6px; height: 6px; border-radius: 50%; background: #e95420; }
.app-grid { margin-top: auto; margin-bottom: 16px; display: grid; grid-template-columns: repeat(3, 6px); gap: 7px; }
.app-grid i { width: 6px; height: 6px; border-radius: 50%; background: #eee; }

.window { flex: 1; min-width: 0; display: flex; flex-direction: column; background: #fff; }
.tabstrip { height: 34px; display: flex; align-items: center; background: linear-gradient(#5a5750, #42413c); padding-left: 9.500px; }
.tab { width: 91.100px; height: 34px; display: flex; align-items: center; padding-left: 11px; position: relative; color: #dfdbd2; font-size: 14.300px; }
.tab::after { content: ""; position: absolute; right: 0; top: 7px; width: 1px; height: 21px; background: #8b8982; }
.tab.plain::after { display: none; }
.fav { width: 16px; height: 16px; }
.tab-title { width: 28px; overflow: hidden; margin-left: 8px; line-height: 34px; -webkit-mask-image: linear-gradient(90deg, #000 50%, transparent); mask-image: linear-gradient(90deg, #000 50%, transparent); }
.close { width: 9px; height: 9px; margin-left: 8.500px; }
.close path { stroke: #e3e0d9; stroke-width: 1.800; }
.tab.active { background: #f2f1f0; border-radius: 8px 8px 0 0; color: #4a4a4a; }
.tab.active .close path { stroke: #4a4a4a; }
.tab.active::before, .tab.active::after { content: ""; position: absolute; top: auto; bottom: 0; width: 8px; height: 8px; }
.tab.active::before { left: -8px; background: radial-gradient(circle at 0 0, transparent 7.500px, #f2f1f0 8px); }
.tab.active::after { right: -8px; background: radial-gradient(circle at 100% 0, transparent 7.500px, #f2f1f0 8px); }
.plus { width: 12px; height: 12px; margin-left: 16px; }
.controls { margin-left: auto; margin-right: 4.500px; display: flex; gap: 2px; }
.controls svg { width: 18px; height: 18px; }

.toolbar { height: 36px; background: #f2f1f0; display: flex; align-items: center; padding: 0 0 0 14px; }
.nav-icon { width: 16px; height: 16px; margin-right: 16px; }
.omnibox { width: 1237px; height: 28px; margin-left: -2px; border-radius: 14px; background: #fff; display: flex; align-items: center; padding: 0 10px 0 11px; font-size: 14px; line-height: 28px; }
.host { margin-left: 9px; color: #333; }
.path { color: #777; }
.star { width: 17px; height: 17px; margin-left: auto; }
.extensions { display: flex; gap: 16px; margin-left: 14px; }
.extensions svg { width: 16px; height: 16px; }
.avatar { width: 22px; height: 22px; border-radius: 50%; background: #ef6c00; color: #fff; font: 12px/22px Roboto, sans-serif; text-align: center; margin-left: 13px; }
.kebab { margin-left: 20px; display: flex; flex-direction: column; gap: 3px; }
.kebab i { width: 3px; height: 3px; border-radius: 50%; background: #45484c; }

.bookmarks { height: 34px; background: #f2f1f0; border-bottom: 1px solid #b9b9b9; display: flex; align-items: flex-start; padding: 7px 0 0 14px; font-size: 14.300px; color: #555; }
.bookmark { display: flex; align-items: center; gap: 8px; line-height: 16px; flex: none; }
.mark { width: 16px; height: 16px; position: relative; }
.mark em { position: absolute; inset: 0; text-align: center; line-height: 16px; }
.mark .pbox { font: 900 12.500px/15px "Noto Sans", sans-serif; color: #000; right: 3px; }
.mark .cim { font: italic bold 6.700px/16px "Liberation Sans", sans-serif; color: #fff; }
.more { width: 9px; height: 8px; margin: 4px 19px 0 auto; }

.jenkins-head { height: 56px; background: #000; color: #fff; display: flex; align-items: center; padding-left: 17px; font-size: 15.500px; }
.butler { width: 26px; height: 38px; }
.wordmark { font-family: "DejaVu Serif", serif; font-weight: bold; font-size: 26px; line-height: 40px; margin: -2px 0 0 14px; }
.searchbox { width: 300px; height: 40px; margin-left: 857px; border-radius: 4px; background: #fff; color: #757575; display: flex; align-items: center; padding: 0 10px 0 11px; }
.searchbox span { margin-left: 14px; }
.q { width: 20px; height: 20px; margin-left: auto; }
.person { width: 16px; height: 16px; margin-left: 24px; }
.user { margin-left: 9px; }
.logout { width: 22px; height: 18px; margin: 0 5px 0 29px; }

.crumbs { height: 40px; background: #f8f8f8; color: #4d545d; display: flex; align-items: center; padding-left: 28.500px; font-size: 15.500px; }
.crumbs i { border: 4px solid transparent; border-left-color: #aaa; border-right: 0; margin: 0 16px 0 24px; }

.page { height: 766px; display: flex; }
aside { width: 340px; flex: none; border-right: 1px solid #e9eef2; }
.tasks { margin: 0; padding: 18px 0 0; list-style: none; }
.tasks li { height: 40px; margin-bottom: 4px; display: flex; align-items: center; padding-left: 20px; font-size: 13.600px; font-weight: 600; }
.tasks li span { margin-top: -2px; }
.tasks svg { width: 24px; height: 24px; margin-right: 8px; }
.tasks .current { background: #e9eef2; box-shadow: inset 4px 0 #0b86d0; }
.tasks .focus { background: #f8f8f8; box-shadow: inset 0 0 0 3px #40b2f2; }
.tasks .last { margin-top: 5px; }
.history-head { height: 42px; margin-top: 23px; background: #e9eef2; display: flex; align-items: center; padding: 0 0 6px 20px; font-size: 13.800px; }
.history-head svg { width: 15px; height: 15px; margin: 3px 15px 0 0; }
.trend { margin-left: 113px; text-decoration: underline; }
.history-head svg.chev { width: 12px; height: 8px; margin: 6px 0 0 14px; }
.find { width: 319px; height: 22px; margin: 10px 0 10px 10px; border: 2px solid; border-color: #222 #777 #777 #222; display: flex; align-items: center; justify-content: space-between; padding: 0 4px 0 5px; font-size: 13.500px; line-height: 18px; color: #777; }
.x { font-size: 13px; }
.build { height: 37px; border-top: 1px solid #e9eef2; border-bottom: 1px solid #e6eaed; background: #f8f8f8; display: flex; align-items: flex-start; padding: 4px 0 0 7px; font-size: 12px; line-height: 17px; }
.build svg { width: 14px; height: 14px; margin: 3px 5px 0 0; }
.build b, .feeds b { text-decoration: underline; }
.date { margin-left: 48px; color: #888; }
.feeds { height: 36px; margin-top: 8px; background: #e9eef2; display: flex; align-items: center; padding: 0 0 2px 40px; font-size: 12px; }
.feeds svg { width: 11px; height: 11px; margin: 5px 7px 0 0; }
.feeds .second { margin-left: 10px; }

main { flex: 1; padding-left: 15px; display: flex; flex-direction: column; }
h1 { margin: 22px 0 0; font-size: 31px; line-height: 40px; height: 40px; }
h2 { margin: 0; font-size: 27px; line-height: 36px; height: 36px; }
h1 span, h2 span { display: inline-block; }
.describe { display: flex; justify-content: flex-end; align-items: center; height: 20px; margin-top: 6px; padding-right: 15px; font-size: 13.600px; color: #0b6aa2; }
.describe svg { width: 16px; height: 16px; margin-top: 3px; }
.disable { display: flex; justify-content: flex-end; padding-right: 19px; margin-top: 8px; }
button { width: 123px; height: 32px; border: 0; border-radius: 4px; background: #0b6aa2; color: #fff; font: bold 11.500px "Noto Sans", sans-serif; display: flex; align-items: center; justify-content: center; padding: 0 0 2px; }
.recent { display: flex; align-items: center; margin: 17px 0 0 18px; font-size: 13.600px; color: #0b6aa2; height: 48px; }
.recent svg { width: 47px; height: 47px; margin-right: 4px; }
.recent b { margin-top: -4px; }
.recent + h2 { margin-top: 25px; }

.stage-view { display: flex; margin-top: 6px; font-size: 13.600px; }
.left { width: 238px; padding-top: 79px; }
.legend { height: 45px; display: flex; flex-direction: column; align-items: flex-end; padding-right: 14.500px; line-height: 21px; }
.run { height: 84px; border: 1px solid #e4e4e4; border-top: 2px solid #c8c8c8; box-shadow: 0 -3px 4px -3px #ccc; display: flex; position: relative; padding: 19px 0 0 22px; font-size: 11.700px; }
.badge { position: absolute; left: 7px; top: 6px; width: 27px; height: 17px; border-radius: 9px; background: #8cacd3; color: #fff; font-weight: bold; line-height: 16px; text-align: center; text-shadow: 0 -1px 1px #446; }
.when { width: 55px; height: 46px; border: 1px solid #eee; box-shadow: 0 2px 3px #ccc; display: flex; flex-direction: column; align-items: center; line-height: 22px; }
.nochange { width: 55px; height: 46px; background: #e3e3e3; border-radius: 0 5px 5px 0; box-shadow: inset 1px 2px 2px #bbb; color: #999; display: flex; flex-direction: column; align-items: center; line-height: 15px; padding-top: 2px; }
.table { width: 552px; height: 211px; border: 1px solid #e6e6e6; display: flex; box-shadow: 1px 2px 4px rgba(0, 0, 0, .35); background: #fff; position: relative; }
.blank { width: 30px; }
.stage { width: 130px; border-left: 1px solid #ececec; background: #fff; border-right: 1px solid #ececec; }
.name { height: 73px; border-bottom: 2px solid #dadada; display: flex; flex-direction: column; align-items: center; justify-content: center; line-height: 21px; font-weight: bold; padding-bottom: 2px; }
.stage:nth-child(even) .name { background: #f8f8f8; }
.avg { height: 50px; background: linear-gradient(#f1f1f1 84%, #cfcfcf); display: flex; flex-direction: column; align-items: center; padding-top: 5px; line-height: 21px; }
.stage:nth-child(even) .avg { background: linear-gradient(#e8e8e8 84%, #c6c6c6); }
.meter { width: 114px; height: 5px; margin: 4px 0 0 5px; align-self: flex-start; background: linear-gradient(90deg, transparent 32px, #c8c8c8 32px 33px, transparent 33px), #dedede; box-shadow: inset 0 0 2px #999; display: flex; }
.meter i { height: 5px; background: linear-gradient(#83a9dc, #4f80ca); }
.cell { height: 86px; padding: 2px 1px; background: #e8f6e8; border-top: 1px solid #e6e6e6; }
.cell div { height: 81px; border: 1px solid #c5d3c8; border-radius: 5px; background: #e3ffe3; display: flex; align-items: center; justify-content: center; padding-bottom: 4px; }
.stage:nth-child(even) .cell div { background: #ddf6dc; }
.perma { margin-top: 28px; }

footer { height: 57px; background: #f8f8f8; border-top: 1px solid #eceff1; display: flex; align-items: center; justify-content: flex-end; gap: 41px; padding: 0 20px 2px 0; font-size: 13.600px; font-weight: 600; }
</style>
